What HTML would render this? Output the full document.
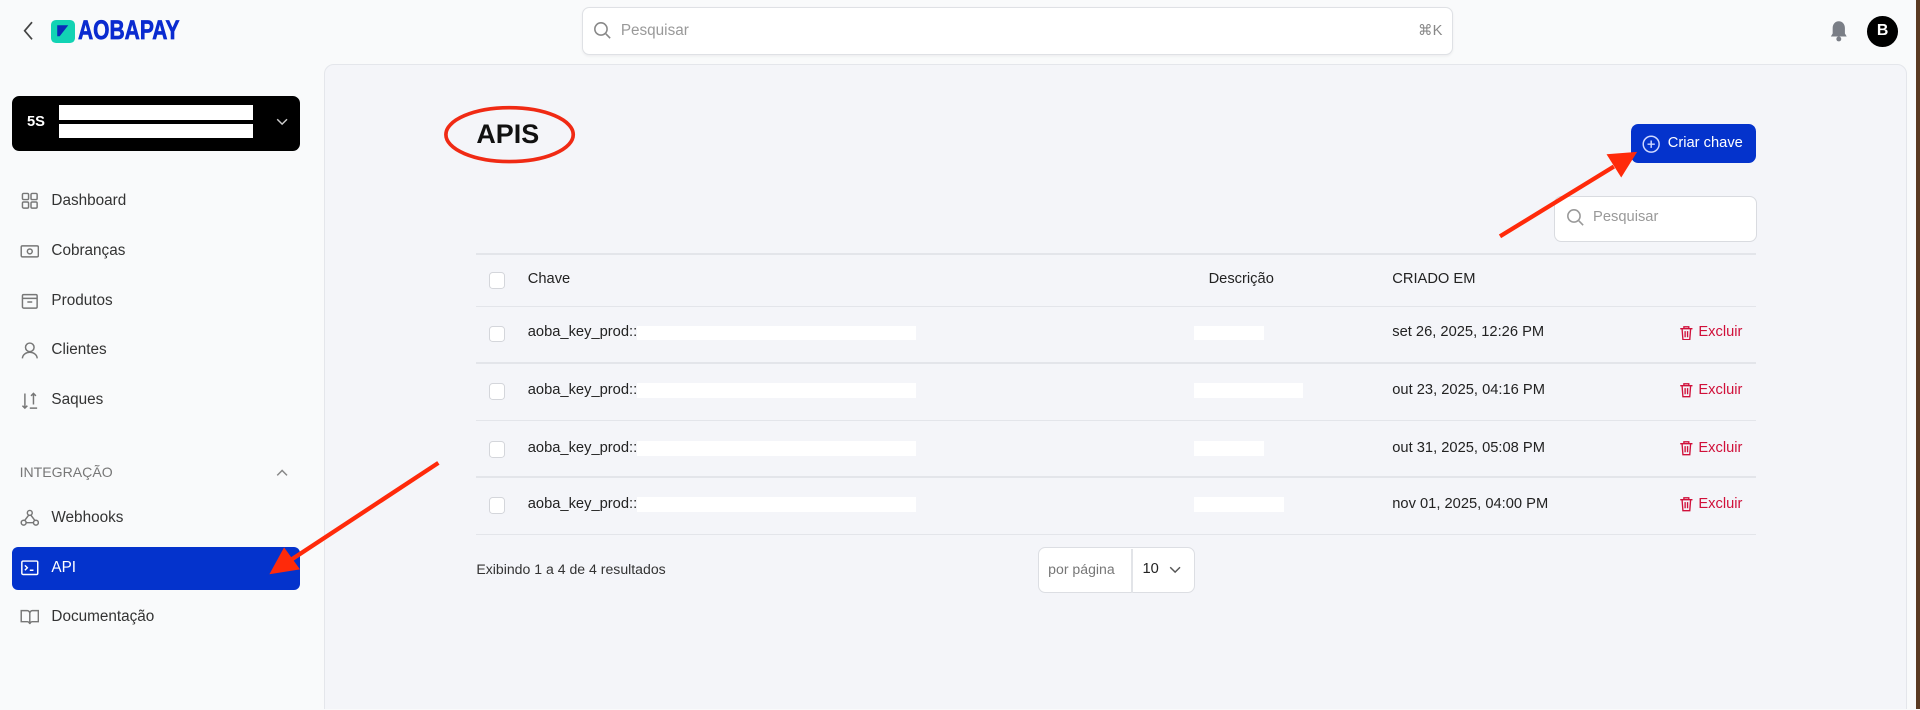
<!DOCTYPE html>
<html><head><meta charset="utf-8"><style>
html,body{margin:0;padding:0;}
body{width:1920px;height:710px;overflow:hidden;background:#f9fafb;font-family:"Liberation Sans",sans-serif;}
#w{zoom:1.22449;width:1568px;height:579px;position:relative;overflow:hidden;background:#f9fafb;}
.a{position:absolute;}
.nav{position:absolute;left:16px;font-size:12.5px;color:#333;display:flex;align-items:center;gap:10px;}
.nav svg{width:16px;height:16px;}
.t{position:absolute;font-size:12px;color:#222;}
.line{position:absolute;left:389px;width:1045px;height:1px;background:#e3e5ea;}
.cb{position:absolute;left:399px;width:12px;height:12px;border:1px solid #d4d6db;border-radius:3px;background:#fff;}
.wb{position:absolute;background:#fff;height:12px;}
.ex{position:absolute;left:1371px;font-size:12px;color:#d0103a;display:flex;align-items:center;gap:4px;}
</style></head><body><div id="w">
<svg class="a" style="left:17px;top:17px" width="12" height="16" viewBox="0 0 12 16"><path d="M9 1L3 8l6 7" fill="none" stroke="#444" stroke-width="1.4"/></svg>
<div class="a" style="left:42px;top:16px;width:19px;height:19px;background:#12d3b4;border-radius:4px"></div>
<svg class="a" style="left:46px;top:20px" width="11" height="11" viewBox="0 0 11 11"><path d="M1 1h9L3 10H1z" fill="#0b2bb8"/></svg>
<div class="a" style="left:64px;top:12px;font-size:22px;font-weight:bold;color:#0a2bd0;transform:scaleX(0.78);transform-origin:left;-webkit-text-stroke:0.6px #0a2bd0">AOBAPAY</div>
<div class="a" style="left:475px;top:6px;width:710px;height:37px;background:#fff;border:1px solid #dfe1e5;border-radius:6px;box-shadow:0 1px 2px rgba(0,0,0,.05)"></div>
<svg class="a" style="left:484px;top:17px" width="16" height="16" viewBox="0 0 16 16"><circle cx="6.5" cy="6.5" r="5" fill="none" stroke="#888" stroke-width="1.3"/><path d="M10.5 10.5L14 14" stroke="#888" stroke-width="1.3"/></svg>
<div class="a" style="left:507px;top:18px;font-size:12.5px;color:#999">Pesquisar</div>
<div class="a" style="left:1158px;top:18px;font-size:12px;color:#888">⌘K</div>
<svg class="a" style="left:1494px;top:16px" width="16" height="18" viewBox="0 0 16 18"><path d="M8 1C5 1 3 3.5 3 6.5V11L1.5 13.5h13L13 11V6.5C13 3.5 11 1 8 1z" fill="#7a7e86"/><circle cx="8" cy="15.5" r="2" fill="#7a7e86"/></svg>
<div class="a" style="left:1525px;top:13px;width:25px;height:25px;border-radius:50%;background:#000;color:#fff;font-size:13px;font-weight:bold;text-align:center;line-height:25px">B</div>
<div class="a" style="left:1565px;top:0;width:3px;height:580px;background:#5a3a22"></div>
<div class="a" style="left:10px;top:78px;width:235px;height:45px;background:#000;border-radius:6px"></div>
<div class="a" style="left:22px;top:93px;color:#fff;font-size:12px;font-weight:bold">5S</div>
<div class="wb" style="left:48px;top:86px;width:159px;height:12px"></div>
<div class="wb" style="left:48px;top:101px;width:159px;height:12px"></div>
<svg class="a" style="left:225px;top:96px" width="10" height="7" viewBox="0 0 10 7"><path d="M1 1l4 4 4-4" fill="none" stroke="#ccc" stroke-width="1.2"/></svg>
<div class="nav" style="top:156px"><svg viewBox="0 0 16 16" fill="none" stroke="#777" stroke-width="1.2"><rect x="2" y="2" width="5" height="5" rx="1"/><rect x="9" y="2" width="5" height="5" rx="1"/><rect x="2" y="9" width="5" height="5" rx="1"/><rect x="9" y="9" width="5" height="5" rx="1"/></svg>Dashboard</div>
<div class="nav" style="top:197px"><svg viewBox="0 0 16 16" fill="none" stroke="#777" stroke-width="1.2"><rect x="1" y="4" width="14" height="9" rx="1"/><circle cx="8" cy="8.5" r="2"/></svg>Cobranças</div>
<div class="nav" style="top:238px"><svg viewBox="0 0 16 16" fill="none" stroke="#777" stroke-width="1.2"><rect x="2" y="3" width="12" height="11" rx="1"/><path d="M2 6h12M6 9h4"/></svg>Produtos</div>
<div class="nav" style="top:278px"><svg viewBox="0 0 16 16" fill="none" stroke="#777" stroke-width="1.2"><circle cx="8" cy="6" r="3.5"/><path d="M2 15c0-3 3-5 6-5s6 2 6 5"/></svg>Clientes</div>
<div class="nav" style="top:319px"><svg viewBox="0 0 16 16" fill="none" stroke="#777" stroke-width="1.2"><path d="M4 2v12M2 12l2 2 2-2M11 2v9M9 4l2-2 2 2M8 14h6"/></svg>Saques</div>
<div class="a" style="left:16px;top:379px;font-size:11.5px;color:#777">INTEGRAÇÃO</div>
<svg class="a" style="left:225px;top:382px" width="10" height="7" viewBox="0 0 10 7"><path d="M1 6l4-4 4 4" fill="none" stroke="#888" stroke-width="1.2"/></svg>
<div class="nav" style="top:415px"><svg viewBox="0 0 16 16" fill="none" stroke="#777" stroke-width="1.2"><circle cx="8" cy="4" r="2"/><circle cx="3" cy="12" r="2"/><circle cx="13" cy="12" r="2"/><path d="M7 6l-3 4M9 6l3 4M5 12h6"/></svg>Webhooks</div>
<div class="a" style="left:10px;top:447px;width:235px;height:35px;background:#0433cc;border-radius:5px"></div>
<div class="nav" style="top:456px;color:#fff"><svg viewBox="0 0 16 16" fill="none" stroke="#fff" stroke-width="1.2"><rect x="1.5" y="2.5" width="13" height="11" rx="1"/><path d="M4 6l2 2-2 2M8 10h3"/></svg>API</div>
<div class="nav" style="top:496px"><svg viewBox="0 0 16 16" fill="none" stroke="#777" stroke-width="1.2"><path d="M1 3h5c1 0 2 1 2 2v9c0-1-1-2-2-2H1zM15 3h-5c-1 0-2 1-2 2v9c0-1 1-2 2-2h5z"/></svg>Documentação</div>
<div class="a" style="left:265px;top:52px;width:1291px;height:540px;background:#f4f5f9;border:1px solid #e4e6eb;border-radius:8px"></div>
<div class="a" style="left:389px;top:97px;font-size:22px;font-weight:bold;color:#111">APIS</div>
<svg class="a" style="left:360px;top:85px" width="112" height="52"><ellipse cx="56" cy="25" rx="52" ry="22" fill="none" stroke="#f02a14" stroke-width="3"/></svg>
<div class="a" style="left:1332px;top:101px;width:102px;height:32px;background:#0433cc;border-radius:6px"></div>
<svg class="a" style="left:1341px;top:110px" width="15" height="15" viewBox="0 0 15 15"><circle cx="7.5" cy="7.5" r="6.5" fill="none" stroke="#cfd8ff" stroke-width="1.2"/><path d="M7.5 4.5v6M4.5 7.5h6" stroke="#cfd8ff" stroke-width="1.2"/></svg>
<div class="a" style="left:1362px;top:110px;font-size:12px;color:#fff">Criar chave</div>
<div class="a" style="left:1269px;top:160px;width:164px;height:36px;background:#fff;border:1px solid #d9dbe0;border-radius:6px"></div>
<svg class="a" style="left:1279px;top:170px" width="16" height="16" viewBox="0 0 16 16"><circle cx="6.5" cy="6.5" r="5" fill="none" stroke="#999" stroke-width="1.3"/><path d="M10.5 10.5L14 14" stroke="#999" stroke-width="1.3"/></svg>
<div class="a" style="left:1301px;top:171px;font-size:12px;color:#999">Pesquisar</div>
<div class="line" style="top:207px"></div>
<div class="line" style="top:250px"></div>
<div class="line" style="top:296px"></div>
<div class="line" style="top:343px"></div>
<div class="line" style="top:389px"></div>
<div class="line" style="top:436px"></div>
<div class="cb" style="top:222px"></div>
<div class="t" style="left:431px;top:221px">Chave</div>
<div class="t" style="left:987px;top:221px">Descrição</div>
<div class="t" style="left:1137px;top:221px">CRIADO EM</div>
<div class="cb" style="top:266px"></div><div class="t" style="left:431px;top:265px">aoba_key_prod::</div><div class="wb" style="left:520px;top:266px;width:228px"></div><div class="wb" style="left:975px;top:266px;width:57px"></div><div class="t" style="left:1137px;top:265px">set 26, 2025, 12:26 PM</div>
<div class="cb" style="top:313px"></div><div class="t" style="left:431px;top:312px">aoba_key_prod::</div><div class="wb" style="left:520px;top:313px;width:228px"></div><div class="wb" style="left:975px;top:313px;width:89px"></div><div class="t" style="left:1137px;top:312px">out 23, 2025, 04:16 PM</div>
<div class="cb" style="top:360px"></div><div class="t" style="left:431px;top:359px">aoba_key_prod::</div><div class="wb" style="left:520px;top:360px;width:228px"></div><div class="wb" style="left:975px;top:360px;width:57px"></div><div class="t" style="left:1137px;top:359px">out 31, 2025, 05:08 PM</div>
<div class="cb" style="top:406px"></div><div class="t" style="left:431px;top:405px">aoba_key_prod::</div><div class="wb" style="left:520px;top:406px;width:228px"></div><div class="wb" style="left:975px;top:406px;width:74px"></div><div class="t" style="left:1137px;top:405px">nov 01, 2025, 04:00 PM</div>
<div class="ex" style="top:265px"><svg width="12" height="13" viewBox="0 0 12 13" fill="none" stroke="#d0103a" stroke-width="1.1"><path d="M1 3h10M4 3V1.5h4V3M2.5 3l.7 9h5.6l.7-9M5 5v5M7 5v5"/></svg>Excluir</div>
<div class="ex" style="top:312px"><svg width="12" height="13" viewBox="0 0 12 13" fill="none" stroke="#d0103a" stroke-width="1.1"><path d="M1 3h10M4 3V1.5h4V3M2.5 3l.7 9h5.6l.7-9M5 5v5M7 5v5"/></svg>Excluir</div>
<div class="ex" style="top:359px"><svg width="12" height="13" viewBox="0 0 12 13" fill="none" stroke="#d0103a" stroke-width="1.1"><path d="M1 3h10M4 3V1.5h4V3M2.5 3l.7 9h5.6l.7-9M5 5v5M7 5v5"/></svg>Excluir</div>
<div class="ex" style="top:405px"><svg width="12" height="13" viewBox="0 0 12 13" fill="none" stroke="#d0103a" stroke-width="1.1"><path d="M1 3h10M4 3V1.5h4V3M2.5 3l.7 9h5.6l.7-9M5 5v5M7 5v5"/></svg>Excluir</div>
<div class="t" style="left:389px;top:458px;color:#333;font-size:11.5px">Exibindo 1 a 4 de 4 resultados</div>
<div class="a" style="left:848px;top:447px;width:126px;height:36px;background:#fff;border:1px solid #dcdee3;border-radius:6px"></div>
<div class="a" style="left:924px;top:448px;width:1px;height:36px;background:#e2e4e8"></div>
<div class="a" style="left:856px;top:458px;font-size:11.5px;color:#777">por página</div>
<div class="a" style="left:933px;top:458px;font-size:12px;color:#222">10</div>
<svg class="a" style="left:955px;top:462px" width="10" height="7" viewBox="0 0 10 7"><path d="M1 1l4 4 4-4" fill="none" stroke="#555" stroke-width="1.2"/></svg>
<svg class="a" style="left:0;top:0" width="1568" height="579">
<line x1="1225" y1="193" x2="1318" y2="136" stroke="#ff2a0a" stroke-width="3.5"/>
<polygon points="1337,124 1312,126 1324,145" fill="#ff2a0a"/>
<line x1="358" y1="378" x2="238" y2="457" stroke="#ff2a0a" stroke-width="3.5"/>
<polygon points="220,469 232,447 245,465" fill="#ff2a0a"/>
</svg>
</div></body></html>
